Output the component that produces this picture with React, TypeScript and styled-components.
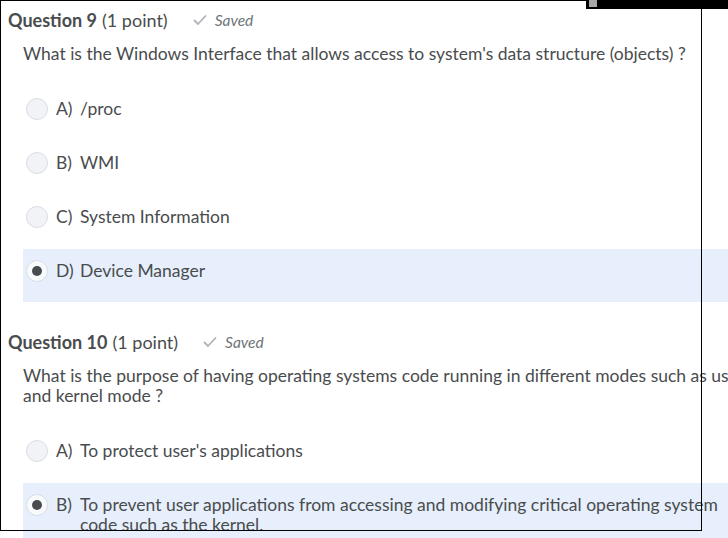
import styled, { createGlobalStyle } from "styled-components";

const GlobalStyle = createGlobalStyle`
  html, body {
    margin: 0;
    padding: 0;
    overflow: hidden;
    background: #ffffff;
  }
  body {
    font-family: Lato, "Open Sans", sans-serif;
    color: #494c4e;
  }
`;

const Page = styled.div`
  position: relative;
  width: 800px;
  padding: 8px 0 0 8px;
`;

const Question = styled.section`
  margin-bottom: 28px;
`;

const Header = styled.div`
  display: flex;
  align-items: center;
  height: 24px;
  font-size: 18px;
  line-height: 24px;
`;

const QTitle = styled.span`
  font-weight: 700;
`;

const Points = styled.span`
  margin-left: 5px;
`;

const Status = styled.span`
  display: flex;
  align-items: center;
  gap: 8px;
  margin-left: 25px;
  font-size: 15.5px;
  font-style: italic;
  color: #6e7477;
  svg {
    width: 14px;
    height: 14px;
  }
`;

const Prompt = styled.p`
  margin: 12px 0 23px 15px;
  font-size: 17.5px;
  line-height: 20px;
`;

const Options = styled.div`
  display: flex;
  flex-direction: column;
  gap: 1px;
  margin-left: 15px;
`;

const Row = styled.label<{ selected: boolean }>`
  display: flex;
  align-items: flex-start;
  min-height: 53px;
  box-sizing: border-box;
  padding: 11px 60px 11px 3px;
  background: ${(p) => (p.selected ? "#e6effb" : "transparent")};
  font-size: 17.5px;
  line-height: 20px;
`;

const Radio = styled.span<{ selected: boolean }>`
  flex: none;
  display: flex;
  align-items: center;
  justify-content: center;
  width: 22px;
  height: 22px;
  margin-right: 8px;
  box-sizing: border-box;
  border-radius: 50%;
  border: 1px solid #d8dde5;
  background: ${(p) => (p.selected ? "#f9fafb" : "#f1f3f6")};
  &::after {
    content: "";
    display: ${(p) => (p.selected ? "block" : "none")};
    width: 10px;
    height: 10px;
    border-radius: 50%;
    background: #494c4e;
  }
`;

const Letter = styled.span`
  flex: none;
  width: 24px;
  padding-top: 1px;
`;

const Label = styled.span`
  padding-top: 1px;
`;

// the black frame drawn over the capture
const Frame = styled.div`
  position: absolute;
  left: 0;
  top: 0;
  width: 702px;
  height: 531px;
  box-sizing: border-box;
  border: 1px solid #000;
  pointer-events: none;
`;

const TopBar = styled.div`
  position: absolute;
  left: 586px;
  top: 0;
  width: 142px;
  height: 9px;
  background: #000;
  &::before {
    content: "";
    position: absolute;
    left: 3px;
    top: 0;
    width: 8px;
    height: 7px;
    background: #a9a9a9;
  }
`;

const Check = () => (
  <svg viewBox="0 0 14 14" fill="none">
    <path
      d="M1.5 7.5 L5 11 L12.5 3"
      stroke="#b0b4b8"
      strokeWidth="1.8"
      strokeLinecap="round"
      strokeLinejoin="round"
    />
  </svg>
);

interface IOption {
  letter: string;
  text: string;
  selected?: boolean;
}

interface IQuestion {
  num: number;
  prompt: string;
  options: IOption[];
}

const questions: IQuestion[] = [
  {
    num: 9,
    prompt:
      "What is the Windows Interface that allows access to system's data structure (objects) ?",
    options: [
      { letter: "A)", text: "/proc" },
      { letter: "B)", text: "WMI" },
      { letter: "C)", text: "System Information" },
      { letter: "D)", text: "Device Manager", selected: true },
    ],
  },
  {
    num: 10,
    prompt:
      "What is the purpose of having operating systems code running in different modes such as user mode and kernel mode ?",
    options: [
      { letter: "A)", text: "To protect user's applications" },
      {
        letter: "B)",
        text: "To prevent user applications from accessing and modifying critical operating system code such as the kernel.",
        selected: true,
      },
      { letter: "C)", text: "To allow the kernel to run faster" },
    ],
  },
];

function App() {
  return (
    <>
      <GlobalStyle />
      <Page>
        {questions.map((q) => (
          <Question key={q.num}>
            <Header>
              <QTitle>Question {q.num}</QTitle>
              <Points>(1 point)</Points>
              <Status>
                <Check />
                Saved
              </Status>
            </Header>
            <Prompt>{q.prompt}</Prompt>
            <Options>
              {q.options.map((o) => (
                <Row key={o.letter} selected={!!o.selected}>
                  <Radio selected={!!o.selected} />
                  <Letter>{o.letter}</Letter>
                  <Label>{o.text}</Label>
                </Row>
              ))}
            </Options>
          </Question>
        ))}
      </Page>
      <Frame />
      <TopBar />
    </>
  );
}

export default App;
